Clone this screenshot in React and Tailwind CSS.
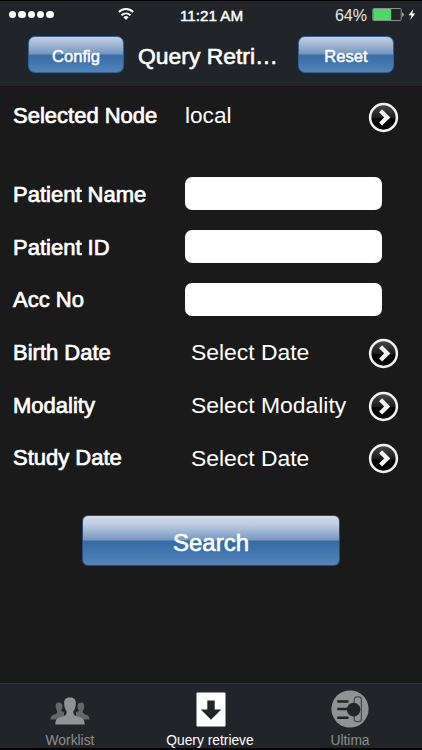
import { useState } from "react";

const FIELDS = [
  { id: "name", label: "Patient Name", type: "input" },
  { id: "pid", label: "Patient ID", type: "input" },
  { id: "acc", label: "Acc No", type: "input" },
  { id: "birth", label: "Birth Date", type: "select", value: "Select Date" },
  { id: "modality", label: "Modality", type: "select", value: "Select Modality" },
  { id: "study", label: "Study Date", type: "select", value: "Select Date" },
];

function ArrowButton() {
  return (
    <button className="absolute left-[368px] top-[12.5px] size-[31px]">
      <svg viewBox="0 0 31 31" className="size-full">
        <defs>
          <linearGradient id="gloss" x1="0" y1="0" x2="0" y2="1">
            <stop offset="0" stopColor="#4a4a4a" />
            <stop offset="0.5" stopColor="#1c1c1c" />
            <stop offset="0.55" stopColor="#000" />
            <stop offset="1" stopColor="#0a0a0a" />
          </linearGradient>
        </defs>
        <circle cx="15.5" cy="15.5" r="13.4" fill="url(#gloss)" stroke="#f2f2f2" strokeWidth="2.5" />
        <path d="M12.6 8.8 L19.3 15.4 L12.6 22" fill="none" stroke="#f4f4f4" strokeWidth="4.3" />
      </svg>
    </button>
  );
}

function StatusBar() {
  return (
    <div className="relative flex h-[30px] w-full">
      <div className="flex w-[118px] items-center gap-[1.9px] pb-[3px] pl-[9px]">
        {[0, 1, 2, 3, 4].map((i) => (
          <span key={i} className="size-[7.4px] rounded-full bg-white" />
        ))}
      </div>
      <svg className="mt-[6px] h-[14px] w-[16px]" viewBox="0 0 16 14" fill="none" stroke="#fff" strokeWidth="1.9">
        <path d="M0.9 5 A10 10 0 0 1 15.1 5" />
        <path d="M3.5 8.2 A6.4 6.4 0 0 1 12.5 8.2" />
        <path d="M8 13 L5.4 10.3 A3.7 3.7 0 0 1 10.6 10.3 Z" fill="#fff" stroke="none" />
      </svg>
      <span className="ml-[46px] text-[15.2px] leading-[29px] [-webkit-text-stroke:0.45px_#fff]">11:21 AM</span>
      <div className="ml-auto flex pr-[5px]">
        <span className="text-[16px] leading-[29px] text-gray-200">64%</span>
        <svg className="ml-[5px] mt-[6px] h-[15px] w-[45px]" viewBox="0 0 45 15">
          <rect x="0.8" y="1.5" width="28.4" height="12" rx="1" fill="none" stroke="#8b8e91" />
          <rect x="1.2" y="2" width="18" height="11" fill="#4cd964" />
          <path d="M30.3 5.2 Q33 7.5 30.3 9.9 Z" fill="#e5e5e5" />
          <path d="M41.5 2 L36.5 8.3 H39.5 L38.2 13 L43.2 6.6 H40.2 Z" fill="#fff" />
        </svg>
      </div>
    </div>
  );
}

function BarButton({ children }) {
  return (
    <button className="h-[37px] w-[96px] rounded-[7px] border border-[#38608f] bg-[linear-gradient(180deg,#c3d0e2_0%,#a5b9d4_20%,#7195c0_49%,#3a6ca6_51%,#4479b2_80%,#5585b8_100%)] pt-[5px] text-[16.6px] leading-none shadow-[0_0_2px_1px_#172b45] [-webkit-text-stroke:0.5px_#fff]">
      {children}
    </button>
  );
}

function FieldRow({ field, value, onChange }) {
  return (
    <div className="relative flex h-[52.7px] items-center pl-[13px]">
      <label className="w-[172px] shrink-0 pt-[2px] text-[22px] leading-none [-webkit-text-stroke:0.7px_#fff]">{field.label}</label>
      {field.type === "input" ? (
        <input
          value={value}
          onChange={onChange}
          className="h-[33px] w-[197px] rounded-[7px] bg-white px-2 text-black outline-none"
        />
      ) : (
        <>
          <span className="pl-[6px] pt-[2px] text-[22.9px] leading-none">{field.value}</span>
          <ArrowButton />
        </>
      )}
    </div>
  );
}

function Tab({ label, active, children }) {
  return (
    <button className={`flex w-[140px] flex-col items-center ${active ? "text-white" : "text-[#8e8e8e]"}`}>
      <span className="flex h-[47px] items-end">{children}</span>
      <span className="mt-[2px] text-[13.8px] leading-[15px]">{label}</span>
    </button>
  );
}

export default function App() {
  const [form, setForm] = useState({ name: "", pid: "", acc: "" });

  return (
    <div className="flex h-[750px] w-[422px] flex-col overflow-hidden bg-[#1a1a1a] font-['Liberation_Sans',Arial,sans-serif] text-white">
      <header className="h-[87px] shrink-0 border-b border-t border-b-[#1b1516] border-t-black bg-[#212529]">
        <StatusBar />
        <div className="flex items-start pl-[28px] pt-[5px]">
          <BarButton>Config</BarButton>
          <h1 className="w-[174px] pl-[14px] pt-[2px] text-[22.9px] leading-[36px] whitespace-nowrap [-webkit-text-stroke:0.6px_#fff]">
            Query Retri…
          </h1>
          <BarButton>Reset</BarButton>
        </div>
      </header>

      <main className="flex-1">
        {/* noeud DICOM */}
        <div className="relative mt-[2px] flex h-[52px] items-center pl-[13px]">
          <span className="w-[172px] pt-[2px] text-[22px] leading-none [-webkit-text-stroke:0.7px_#fff]">Selected Node</span>
          <span className="pt-[2px] text-[22.6px] leading-none">local</span>
          <ArrowButton />
        </div>

        <div className="mt-[26.5px]">
          {FIELDS.map((f) => (
            <FieldRow
              key={f.id}
              field={f}
              value={form[f.id]}
              onChange={(e) => setForm({ ...form, [f.id]: e.target.value })}
            />
          ))}
        </div>

        <button className="ml-[82px] mt-[31px] block h-[51px] w-[258px] rounded-[6px] border border-[#294b75] bg-[linear-gradient(180deg,#d3deec_0%,#b9c8de_20%,#7798c1_49%,#376aa4_51%,#4176b0_75%,#5586b9_100%)] pt-[5px] text-[24px] leading-none [-webkit-text-stroke:0.6px_#fff]">
          Search
        </button>
      </main>

      <nav className="flex h-[67px] shrink-0 border-b-2 border-t border-b-black border-t-[#37373a] bg-[#212529]">
        <Tab label="Worklist">
          <svg className="mb-[6px] h-[28px] w-[40px]" viewBox="0 0 40 28">
            <g fill="#646668">
              <path d="M9 5.5 C6.3 5.5 5.4 7.4 5.7 9.8 C5.9 12 6.6 13 7.2 14 C7.3 16 6.6 16.8 4.5 17.5 C1.8 18.4 0.8 19 0.5 22.5 H14 V15 L11 14 C12 12.5 12.5 11 12.4 9 C12.3 6.7 11.2 5.5 9 5.5 Z" />
              <path d="M31 5.5 C33.7 5.5 34.6 7.4 34.3 9.8 C34.1 12 33.4 13 32.8 14 C32.7 16 33.4 16.8 35.5 17.5 C38.2 18.4 39.2 19 39.5 22.5 H26 V15 L29 14 C28 12.5 27.5 11 27.6 9 C27.7 6.7 28.8 5.5 31 5.5 Z" />
            </g>
            <path
              d="M20 0.5 C15.4 0.5 13.8 3.2 14.2 7 C14.4 10.5 15.4 12.6 16.6 14.2 C16.8 17.8 15.6 18.5 11.5 19.8 C7 21.3 5.5 22.2 5.3 27.5 H34.7 C34.5 22.2 33 21.3 28.5 19.8 C24.4 18.5 23.2 17.8 23.4 14.2 C24.6 12.6 25.6 10.5 25.8 7 C26.2 3.2 24.6 0.5 20 0.5 Z"
              fill="#929292"
            />
          </svg>
        </Tab>
        <Tab label="Query retrieve" active>
          <svg className="mb-[4px] ml-[2px] h-[35px] w-[30px]" viewBox="0 0 30 35">
            <rect x="0.5" y="0.5" width="29" height="34" rx="1" fill="#fff" />
            <path d="M11.3 8.6 H18.7 V17.5 H25.2 L15 27.8 L4.8 17.5 H11.3 Z" fill="#212529" />
          </svg>
        </Tab>
        <Tab label="Ultima">
          <svg className="mb-[3px] h-[38px] w-[38px]" viewBox="0 0 38 38">
            <circle cx="19" cy="19" r="18.6" fill="#929292" />
            <rect x="23.2" y="6.8" width="7.2" height="24.8" rx="2.6" fill="none" stroke="#45484b" strokeWidth="1.2" />
            <g fill="#212529">
              <rect x="6.2" y="10.2" width="11.4" height="2.5" rx="0.6" />
              <rect x="6.2" y="17.8" width="11.4" height="2.5" rx="0.6" />
              <rect x="6.2" y="26.5" width="11.4" height="2.5" rx="0.6" />
              <circle cx="22.6" cy="19.6" r="6.8" />
            </g>
          </svg>
        </Tab>
      </nav>
    </div>
  );
}
